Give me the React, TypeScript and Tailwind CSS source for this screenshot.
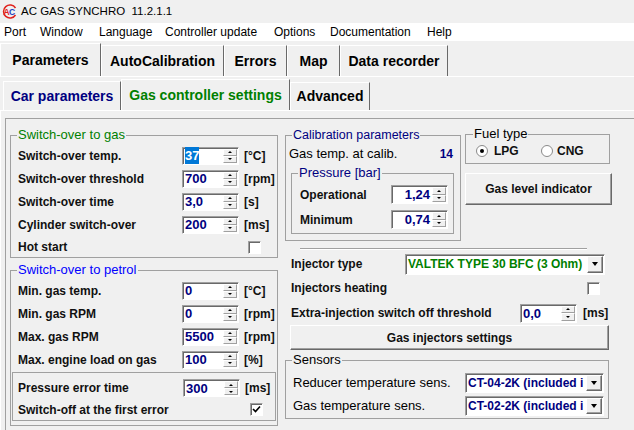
import React from 'react'

const label = 'text-[12px] font-bold text-[#101010]'
const sunken =
  'bg-white border border-t-[#a0a0a0] border-l-[#a0a0a0] border-b-white border-r-white shadow-[inset_1px_1px_0_#696969]'
const raised =
  'bg-[#f0f0f0] border border-t-white border-l-white border-b-[#696969] border-r-[#696969] shadow-[inset_-1px_-1px_0_#a0a0a0]'

const Logo = () => (
  <svg width="17" height="15" viewBox="0 0 17 15" className="ml-[1px]">
    <path d="M14.5 4 A6.5 6.5 0 1 0 14.5 11" fill="none" stroke="#e0201c" strokeWidth="1.5" />
    <text x="2.5" y="11" fontSize="8.5" fontWeight="bold" fill="#e0201c" fontFamily="Liberation Sans">A</text>
    <text x="8" y="11" fontSize="8.5" fontWeight="bold" fill="#1d3fbf" fontFamily="Liberation Sans">C</text>
  </svg>
)

const SpinBtn = ({ up = false }: { up?: boolean }) => (
  <div className="flex-1 flex items-center justify-center bg-[#f0f0f0] border border-t-white border-l-white border-b-[#a0a0a0] border-r-[#a0a0a0]">
    {up ? (
      <div className="w-0 h-0 border-x-[2px] border-x-transparent border-b-[2px] border-b-black" />
    ) : (
      <div className="w-0 h-0 border-x-[2px] border-x-transparent border-t-[2px] border-t-black" />
    )}
  </div>
)

const Spin = ({
  value,
  className = '',
  sel = false,
  right = false,
}: {
  value: string
  className?: string
  sel?: boolean
  right?: boolean
}) => (
  <div className={`flex shrink-0 ${sunken} ${className}`}>
    <div
      className={`flex-1 flex items-center pl-[2px] pr-[2px] text-[13px] font-bold leading-none text-[#000080] ${
        right ? 'justify-end' : ''
      }`}
    >
      {sel ? <span className="bg-[#0078d7] text-white py-[2px]">{value}</span> : value}
    </div>
    <div className="w-[15px] flex flex-col py-[1px] pr-[1px]">
      <SpinBtn up />
      <SpinBtn />
    </div>
  </div>
)

const Check = ({ on = false }: { on?: boolean }) => (
  <div className={`w-[13px] h-[13px] shrink-0 flex items-center justify-center ${sunken}`}>
    {on && (
      <svg width="9" height="9" viewBox="0 0 9 9">
        <path d="M1 4 L3.5 6.5 L8 1.5" fill="none" stroke="#000" strokeWidth="1.6" />
      </svg>
    )}
  </div>
)

const Radio = ({ on = false }: { on?: boolean }) => (
  <div className="w-[12px] h-[12px] shrink-0 rounded-full bg-white border border-[#8a8a8a] flex items-center justify-center">
    {on && <div className="w-[4px] h-[4px] rounded-full bg-black" />}
  </div>
)

const Combo = ({ text, className = '', tc = '' }: { text: string; className?: string; tc?: string }) => (
  <div className={`flex shrink-0 ${sunken} ${className}`}>
    <div className={`flex-1 overflow-hidden whitespace-nowrap flex items-center pl-[2px] text-[12px] font-bold leading-none ${tc}`}>
      {text}
    </div>
    <div className={`w-[16px] m-[1px] flex items-center justify-center ${raised}`}>
      <div className="w-0 h-0 border-x-[3.5px] border-x-transparent border-t-[4px] border-t-black" />
    </div>
  </div>
)

const Row = ({
  name,
  value,
  unit,
  sel,
  lw = 'w-[164px]',
}: {
  name: string
  value: string
  unit: string
  sel?: boolean
  lw?: string
}) => (
  <div className="h-[23px] flex items-center">
    <div className={`${label} ${lw} shrink-0`}>{name}</div>
    <Spin value={value} sel={sel} className="w-[57px] h-[18px]" />
    <div className={`${label} ml-[5px]`}>{unit}</div>
  </div>
)

const menu = [
  ['Port', 'w-[36px]'],
  ['Window', 'w-[59px]'],
  ['Language', 'w-[66px]'],
  ['Controller update', 'w-[109px]'],
  ['Options', 'w-[56px]'],
  ['Documentation', 'w-[97px]'],
  ['Help', 'w-[40px]'],
]

const tabs1 = [
  ['Parameters', 'w-[101px] h-[33px]'],
  ['AutoCalibration', 'w-[123px] h-[31px]'],
  ['Errors', 'w-[63px] h-[31px]'],
  ['Map', 'w-[53px] h-[31px]'],
  ['Data recorder', 'w-[108px] h-[31px]'],
]

const tabs2 = [
  ['Car parameters', 'w-[118px] h-[29px] text-[#000080]'],
  ['Gas controller settings', 'w-[169px] h-[31px] text-[#008000]'],
  ['Advanced', 'w-[80px] h-[28px] text-black'],
]

export default function App() {
  return (
    <div className="w-[634px] h-[430px] overflow-hidden bg-[#f0f0f0] font-['Liberation_Sans',Arial,sans-serif] text-black">
      <div className="h-[23px] flex items-center">
        <Logo />
        <span className="ml-[3px] text-[11.5px] text-black whitespace-pre">AC GAS SYNCHRO  11.2.1.1</span>
      </div>

      <div className="h-[18px] bg-white flex items-center pl-[4px] text-[12px]">
        {menu.map(([t, w]) => (
          <div key={t} className={`${w} shrink-0 whitespace-nowrap`}>
            {t}
          </div>
        ))}
      </div>

      <div className="h-[35px] flex items-end">
        {tabs1.map(([t, c]) => (
          <div
            key={t}
            className={`${c} shrink-0 flex items-center justify-center text-[14px] font-bold border-t border-l border-white border-r border-r-[#696969]`}
          >
            {t}
          </div>
        ))}
      </div>

      <div className="border-t border-white">
        <div className="h-[33px] flex items-end pl-[3px]">
          {tabs2.map(([t, c]) => (
            <div
              key={t}
              className={`${c} shrink-0 flex items-center justify-center text-[14px] font-bold border-t border-l border-white border-r border-r-[#696969]`}
            >
              {t}
            </div>
          ))}
        </div>

        <div className="border-t border-l border-white h-[320px]">
          <div className="mt-[7px] ml-[4px] border-t border-l border-[#a0a0a0] h-[320px] flex">
            {/* left column */}
            <div className="ml-[4px] w-[268px] shrink-0 flex flex-col">
              <fieldset className="mt-[9px] h-[130px] border border-[#a0a0a0]">
                <legend className="ml-[6px] px-[1px] text-[13px] leading-[14px] text-[#008000]">Switch-over to gas</legend>
                <div className="pt-[2px] pl-[7px]">
                  <Row name="Switch-over temp." value="37" unit="[°C]" sel />
                  <Row name="Switch-over threshold" value="700" unit="[rpm]" />
                  <Row name="Switch-over time" value="3,0" unit="[s]" />
                  <Row name="Cylinder switch-over" value="200" unit="[ms]" />
                  <div className="h-[22px] flex items-center">
                    <div className={`${label} w-[230px] shrink-0`}>Hot start</div>
                    <Check />
                  </div>
                </div>
              </fieldset>

              <fieldset className="mt-[5px] h-[163px] border border-[#a0a0a0]">
                <legend className="ml-[6px] px-[1px] text-[13px] leading-[14px] text-[#0000ff]">Switch-over to petrol</legend>
                <div className="pt-[2px] pl-[7px]">
                  <Row name="Min. gas temp." value="0" unit="[°C]" />
                  <Row name="Min. gas RPM" value="0" unit="[rpm]" />
                  <Row name="Max. gas RPM" value="5500" unit="[rpm]" />
                  <Row name="Max. engine load on gas" value="100" unit="[%]" />
                </div>
                <div className="mx-[1px] mt-[1px] h-[49px] border border-[#a0a0a0] pt-[4px] pl-[5px]">
                  <div className="h-[22px] flex items-center">
                    <div className={`${label} w-[165px] shrink-0`}>Pressure error time</div>
                    <Spin value="300" className="w-[57px] h-[18px]" />
                    <div className={`${label} ml-[5px]`}>[ms]</div>
                  </div>
                  <div className="h-[21px] flex items-center">
                    <div className={`${label} w-[232px] shrink-0`}>Switch-off at the first error</div>
                    <Check on />
                  </div>
                </div>
              </fieldset>
            </div>

            {/* right column */}
            <div className="ml-[7px] w-[326px] shrink-0 flex flex-col">
              <div className="flex">
                <fieldset className="mt-[9px] w-[176px] h-[113px] shrink-0 border border-[#a0a0a0]">
                  <legend className="ml-[6px] px-[1px] text-[12.5px] leading-[14px] text-[#000080]">Calibration parameters</legend>
                  <div className="h-[24px] flex items-center justify-between pl-[3px] pr-[7px]">
                    <span className="text-[13px]">Gas temp. at calib.</span>
                    <span className="text-[12px] font-bold text-[#000080]">14</span>
                  </div>
                  <fieldset className="ml-[5px] w-[163px] h-[68px] border border-[#a0a0a0]">
                    <legend className="ml-[6px] px-[1px] text-[13px] leading-[14px] text-[#000080]">Pressure [bar]</legend>
                    <div className="pt-[2px] pl-[8px]">
                      <div className="h-[25px] flex items-center">
                        <div className={`${label} w-[91px] shrink-0`}>Operational</div>
                        <Spin value="1,24" right className="w-[57px] h-[19px]" />
                      </div>
                      <div className="h-[25px] flex items-center">
                        <div className={`${label} w-[91px] shrink-0`}>Minimum</div>
                        <Spin value="0,74" right className="w-[57px] h-[19px]" />
                      </div>
                    </div>
                  </fieldset>
                </fieldset>

                <div className="ml-[4px] flex flex-col">
                  <fieldset className="mt-[8px] w-[145px] h-[37px] border border-[#a0a0a0]">
                    <legend className="ml-[7px] px-[1px] text-[13px] leading-[14px]">Fuel type</legend>
                    <div className="h-[20px] flex items-center pl-[10px]">
                      <div className="w-[65px] flex items-center">
                        <Radio on />
                        <span className={`${label} ml-[6px]`}>LPG</span>
                      </div>
                      <Radio />
                      <span className={`${label} ml-[4px]`}>CNG</span>
                    </div>
                  </fieldset>
                  <div className={`mt-[9px] w-[147px] h-[32px] flex items-center justify-center ${label} ${raised}`}>
                    Gas level indicator
                  </div>
                </div>
              </div>

              <div className="mt-[7px] ml-[15px] w-[287px] border-t border-[#a0a0a0] border-b border-b-white" />

              <div className="mt-[3px] h-[22px] flex items-center pl-[6px]">
                <div className={`${label} w-[114px] shrink-0`}>Injector type</div>
                <Combo text="VALTEK TYPE 30 BFC (3 Ohm)" tc="text-[#008000]" className="w-[200px] h-[21px]" />
              </div>
              <div className="h-[26px] flex items-center pl-[6px]">
                <div className={`${label} w-[296px] shrink-0`}>Injectors heating</div>
                <Check />
              </div>
              <div className="h-[24px] flex items-center pl-[6px]">
                <div className={`${label} w-[229px] shrink-0`}>Extra-injection switch off threshold</div>
                <Spin value="0,0" className="w-[57px] h-[19px]" />
                <div className={`${label} ml-[6px]`}>[ms]</div>
              </div>
              <div className={`ml-[5px] w-[319px] h-[25px] flex items-center justify-center ${label} ${raised}`}>
                Gas injectors settings
              </div>

              <fieldset className="mt-[3px] w-[324px] h-[66px] border border-[#a0a0a0]">
                <legend className="ml-[6px] px-[1px] text-[13px] leading-[14px]">Sensors</legend>
                <div className="pt-[4px] pl-[7px]">
                  <div className="h-[23px] flex items-center">
                    <div className="text-[13px] w-[172px] shrink-0">Reducer temperature sens.</div>
                    <Combo text="CT-04-2K (included i" tc="text-[#000080]" className="w-[139px] h-[20px]" />
                  </div>
                  <div className="h-[23px] flex items-center">
                    <div className="text-[13px] w-[172px] shrink-0">Gas temperature sens.</div>
                    <Combo text="CT-02-2K (included i" tc="text-[#000080]" className="w-[139px] h-[20px]" />
                  </div>
                </div>
              </fieldset>
            </div>
          </div>
        </div>
      </div>
    </div>
  )
}
